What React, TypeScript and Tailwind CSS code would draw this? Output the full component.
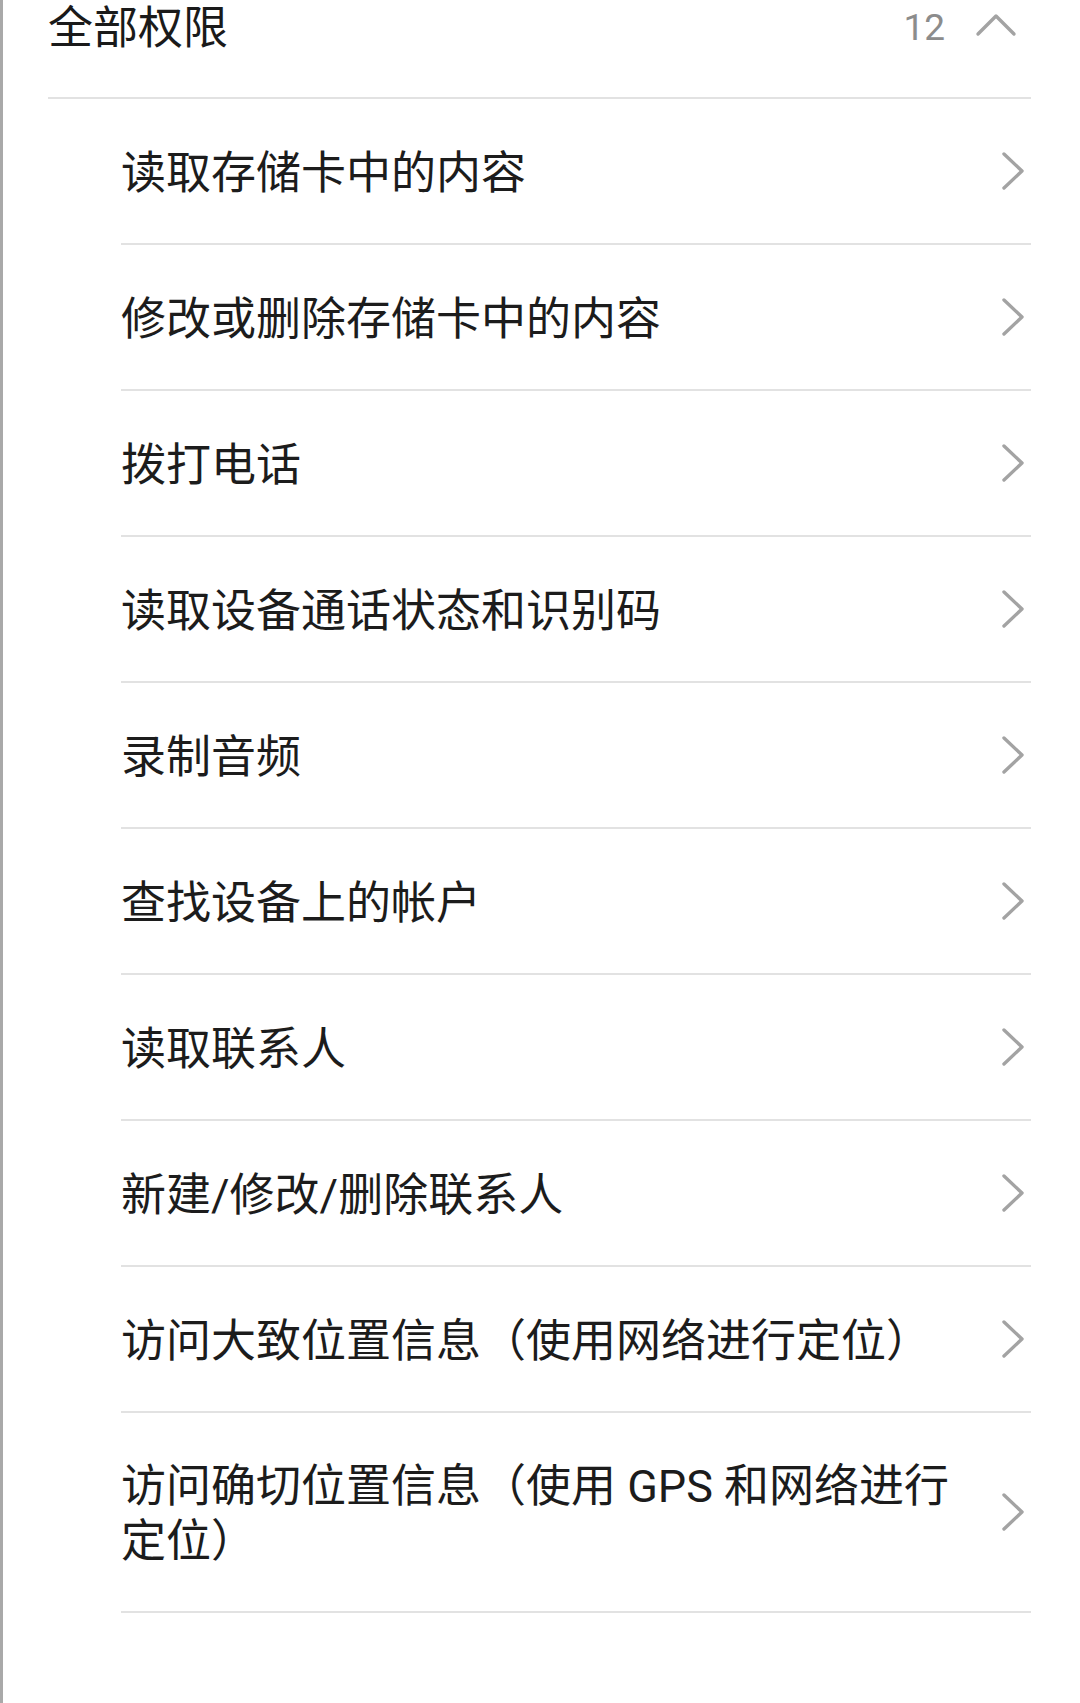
import React from "react"

const items = [
  "读取存储卡中的内容",
  "修改或删除存储卡中的内容",
  "拨打电话",
  "读取设备通话状态和识别码",
  "录制音频",
  "查找设备上的帐户",
  "读取联系人",
  "新建/修改/删除联系人",
  "访问大致位置信息（使用网络进行定位）",
]

const ChevronRight = () => (
  <svg width="26" height="40" viewBox="0 0 26 40" className="shrink-0">
    <polyline
      points="4,3 22,20 4,37"
      fill="none"
      stroke="#a3a3a3"
      strokeWidth="3.4"
      strokeLinecap="round"
      strokeLinejoin="round"
    />
  </svg>
)

const Row = ({ text, tall }: { text: string; tall?: boolean }) => (
  <div
    className={`ml-[118px] mr-[49px] flex items-center justify-between border-b-2 border-[#e2e2e2] ${
      tall ? "h-[200px]" : "h-[146px]"
    }`}>
    <div className="max-w-[860px] pt-[4px] text-[45px] leading-[55px] text-[#1c1c1c]">
      {text}
    </div>
    <div className="pr-[5px]">
      <ChevronRight />
    </div>
  </div>
)

const App = () => {
  return (
    <div
      className="min-h-[1703px] w-[1080px] border-l-[3px] border-[#a9a9a9] bg-white"
      style={{ fontFamily: "Roboto, 'Noto Sans CJK SC', sans-serif" }}>
      <div className="ml-[45px] mr-[49px] flex h-[99px] items-start justify-between border-b-2 border-[#e2e2e2]">
        <div className="pt-[1px] text-[45px] leading-[55px] text-[#1a1a1a]">全部权限</div>
        <div className="flex h-[55px] items-center gap-[30px] pr-[14px]">
          <span className="text-[37px] leading-none text-[#8c8c8c]">12</span>
          <svg width="42" height="24" viewBox="0 0 42 24" className="-mt-[6px]">
            <polyline
              points="3,21 21,3 39,21"
              fill="none"
              stroke="#a3a3a3"
              strokeWidth="3.4"
              strokeLinecap="round"
              strokeLinejoin="round"
            />
          </svg>
        </div>
      </div>
      {items.map((t) => (
        <Row key={t} text={t} />
      ))}
      <Row text="访问确切位置信息（使用 GPS 和网络进行定位）" tall />
    </div>
  )
}

export default App
